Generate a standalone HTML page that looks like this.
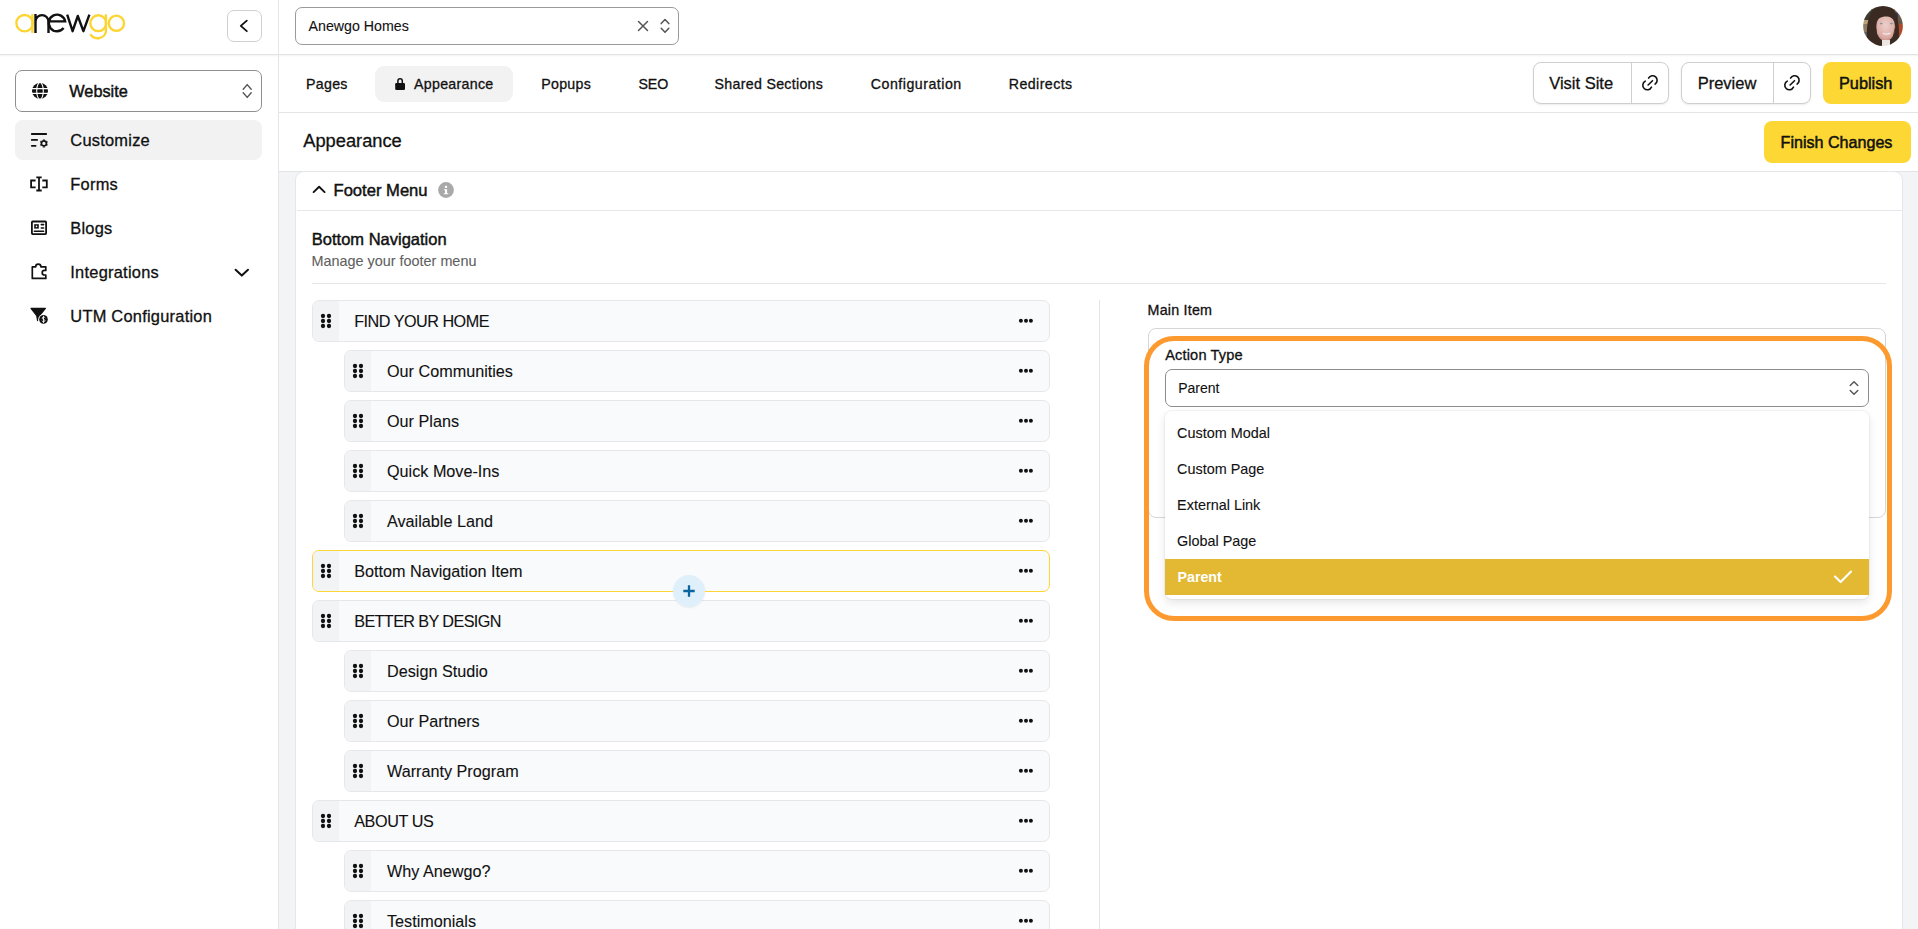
<!DOCTYPE html>
<html><head><meta charset="utf-8">
<style>
*{box-sizing:border-box;margin:0;padding:0}
html,body{width:1918px;height:929px;overflow:hidden;background:#fff}
body{font-family:"Liberation Sans",sans-serif;color:#111;position:relative}
.a{position:absolute}
.t{position:absolute;white-space:nowrap;line-height:1}
.box{position:absolute;border:1px solid #c8c8c8;border-radius:7px;background:#fff}
.btn{position:absolute;border:1px solid #cfcfcf;border-radius:8px;background:#fff;box-shadow:0 1px 2px rgba(0,0,0,.08)}
.yel{position:absolute;background:#fdd835;border-radius:8px}
</style></head><body>
<div class="a" style="left:0;top:54px;width:1918px;height:1px;background:#e3e3e3"></div>
<div class="a" style="left:0;top:55px;width:1918px;height:2px;background:linear-gradient(#f3f3f3,#fff)"></div>
<div class="a" style="left:278px;top:0;width:1px;height:929px;background:#e5e5e5"></div>
<svg class="a" style="left:0;top:0" width="140" height="54" viewBox="0 0 140 54" fill="none" stroke-width="2.4">
<g stroke="#fcd535"><circle cx="24.6" cy="23.2" r="8.2"/><path d="M32.4 14.2V32.9"/>
<circle cx="98.3" cy="23.2" r="7.9"/><path d="M105.9 14.2V31.2A8.2 7.2 0 0 1 90.4 34.2"/>
<circle cx="116.4" cy="23.2" r="7.6"/></g>
<g stroke="#111"><path d="M35.5 14V32.9M35.5 21.6A6.5 6.5 0 0 1 48.5 21.6V32.9"/>
<path d="M48.6 21.4H65.2A8.3 8.3 0 1 0 63.6 28.1"/>
<path d="M67.2 14.6L72.6 31.2L77.8 16L83.4 31.2L89.4 14.6" stroke-linejoin="round"/></g>
</svg>
<div class="box" style="left:227px;top:10px;width:35px;height:32px;border-color:#d0d0d0;border-radius:7px"></div>
<svg class="a" style="left:227px;top:10px" width="35" height="32" viewBox="227 10 35 32" fill="none" stroke="#111" stroke-width="1.8" stroke-linecap="round" stroke-linejoin="round"><path d="M246.8 20.6L240.8 25.9L246.8 31.2"/></svg>
<div class="box" style="left:15px;top:70px;width:247px;height:42px;border-color:#8f8f8f;border-radius:7px"></div>
<svg class="a" style="left:30px;top:81px" width="20" height="20" viewBox="30 81 20 20">
<circle cx="40" cy="90.9" r="8" fill="#111"/>
<g stroke="#fff" stroke-width="1.1" fill="none"><path d="M31 88.6H49M31 93.4H49"/><ellipse cx="40" cy="90.9" rx="3.3" ry="8.4"/></g>
</svg>
<div class="t" style="left:69.30px;top:83.20px;font-size:16.3px;-webkit-text-stroke:0.45px #111">Website</div>
<svg class="a" style="left:240px;top:82px" width="14" height="18" viewBox="240 82 14 18" fill="none" stroke="#555" stroke-width="1.4" stroke-linecap="round" stroke-linejoin="round"><path d="M243.2 89.2L247.2 84.6L251.2 89.2M243.2 92.8L247.2 97.4L251.2 92.8"/></svg>
<div class="a" style="left:15px;top:120px;width:247px;height:40px;background:#f2f2f2;border-radius:8px"></div>
<div class="t" style="left:70.30px;top:132.32px;font-size:16.4px;letter-spacing:0.25px;-webkit-text-stroke:0.3px #111">Customize</div>
<div class="t" style="left:70.30px;top:176.12px;font-size:16.4px;letter-spacing:0.25px;-webkit-text-stroke:0.3px #111">Forms</div>
<div class="t" style="left:70.30px;top:220.12px;font-size:16.4px;letter-spacing:0.25px;-webkit-text-stroke:0.3px #111">Blogs</div>
<div class="t" style="left:70.30px;top:264.12px;font-size:16.4px;letter-spacing:0.25px;-webkit-text-stroke:0.3px #111">Integrations</div>
<div class="t" style="left:70.30px;top:308.12px;font-size:16.4px;letter-spacing:0.25px;-webkit-text-stroke:0.3px #111">UTM Configuration</div>
<svg class="a" style="left:26px;top:120px" width="30" height="220" viewBox="26 120 30 220" fill="none" stroke="#111" stroke-width="1.8" stroke-linecap="round">
<path d="M31.8 134H46.2M31.8 139.9H37.1M31.8 145.8H35.6"/>
<g transform="translate(43.9 143.4)" stroke="#111"><circle r="2.5" stroke-width="1.7"/><path d="M0 -4V-3.2M3.46 -2L2.77 -1.6M3.46 2L2.77 1.6M0 4V3.2M-3.46 2L-2.77 1.6M-3.46 -2L-2.77 -1.6" stroke-width="2" stroke-linecap="butt"/></g>
<path d="M35.6 180.5H31.1V187.4H35.6M42.3 180.5H46.8V187.4H42.3M39 177.4V190.5M36.3 177.4H41.7M36.3 190.5H41.7" stroke-linecap="butt"/>
<rect x="31.9" y="221.5" width="14.2" height="12.6" rx="0.8"/>
<rect x="34.2" y="224.2" width="4.6" height="4.4" fill="#111" stroke="none"/><circle cx="36.5" cy="226.4" r="0.8" fill="#fff" stroke="none"/>
<path d="M41.3 224.6H43.6M41.3 228H43.6M34.4 231.3H43.6" stroke-width="1.6"/>
<path d="M32.3 278.4V266.8H35.7A2.6 2.6 0 0 1 40.9 266.8H45.8V270.4H44.5A2.3 2.3 0 0 0 44.5 275H45.8V278.4Z" stroke-linejoin="round" stroke-width="1.7"/>
<path d="M31 308.4H45.4L39.6 315.6L37.6 320.6L36.7 315.6Z" fill="#111" stroke="#111" stroke-width="1.2" stroke-linejoin="round"/>
<circle cx="43.5" cy="319.4" r="5.3" fill="#fff" stroke="none"/>
<circle cx="43.5" cy="319.4" r="4.3" fill="#111" stroke="none"/>
<path d="M45 317.6C44.6 316.8 42.2 316.8 42.1 318.1C42 319.4 45 319.2 45 320.6C45 321.9 42.4 322 42 321.1M43.5 316.2V322.6" stroke="#fff" stroke-width="0.85" stroke-linecap="round"/>
</svg>
<svg class="a" style="left:230px;top:264px" width="24" height="18" viewBox="230 264 24 18" fill="none" stroke="#111" stroke-width="2" stroke-linecap="round" stroke-linejoin="round"><path d="M235.6 269.8L241.8 275.6L248 269.8"/></svg>
<div class="box" style="left:295px;top:7px;width:384px;height:38px;border-color:#9a9a9a;border-radius:7px"></div>
<div class="t" style="left:308.60px;top:19.28px;font-size:14.2px;-webkit-text-stroke:0.1px #111">Anewgo Homes</div>
<svg class="a" style="left:634px;top:15px" width="40" height="22" viewBox="634 15 40 22" fill="none" stroke="#555" stroke-width="1.5" stroke-linecap="round" stroke-linejoin="round"><path d="M638.5 21.5L647.5 30.5M647.5 21.5L638.5 30.5"/><path d="M661.2 23.6L665 19.6L668.8 23.6M661.2 28.2L665 32.2L668.8 28.2"/></svg>
<svg class="a" style="left:1863px;top:6px" width="40" height="40" viewBox="0 0 40 40">
<defs><filter id="bl"><feGaussianBlur stdDeviation="0.5"/></filter><clipPath id="av"><circle cx="20" cy="20" r="19.9"/></clipPath>
<radialGradient id="fg" cx="0.5" cy="0.42" r="0.6"><stop offset="0" stop-color="#ecd0cc"/><stop offset="0.7" stop-color="#dfb0aa"/><stop offset="1" stop-color="#c99088"/></radialGradient></defs>
<g clip-path="url(#av)" filter="url(#bl)">
<rect width="40" height="40" fill="#8c7c64"/>
<rect x="0" y="0" width="14" height="14" fill="#3c3a30"/>
<rect x="0" y="14" width="9" height="4" fill="#b8a27a"/>
<rect x="0" y="26" width="9" height="14" fill="#5a6068"/>
<rect x="31" y="0" width="9" height="40" fill="#6a5848"/>
<rect x="33" y="7" width="1.8" height="22" fill="#2a3560"/>
<rect x="35.5" y="18" width="4.5" height="12" fill="#b04a2a"/>
<path d="M5 40C2 22 4 0 21 -1C35 -1 37 16 35.5 40Z" fill="#3b2a22"/>
<ellipse cx="22.6" cy="21.5" rx="9.6" ry="13.6" fill="url(#fg)"/>
<path d="M12 17C13 9 18 6 23 6.5C29 7 32 11 33 17C30 12 27 10.5 23 10.5C18 10.5 14 13 12 17Z" fill="#3b2a22"/>
<path d="M10 40C11 30 12 24 13 18L15 40Z" fill="#3b2a22"/>
<path d="M31 40C31 30 32 24 32.5 18L28 40Z" fill="#3b2a22"/>
<rect x="19" y="34" width="8" height="6" fill="#ece6e2"/>
<ellipse cx="18.2" cy="17.6" rx="1.4" ry="0.8" fill="#7b94a6"/><ellipse cx="28.4" cy="17.6" rx="1.4" ry="0.8" fill="#7b94a6"/>
<path d="M20 27.2C22 28.4 25 28.4 27.3 27.2" stroke="#f3eeee" stroke-width="1.3" fill="none"/>
</g></svg>
<div class="a" style="left:279px;top:112px;width:1639px;height:1px;background:#e5e5e5"></div>
<div class="a" style="left:375px;top:66px;width:138px;height:36px;background:#f2f2f2;border-radius:9px"></div>
<svg class="a" style="left:392px;top:76px" width="16" height="16" viewBox="392 76 16 16"><path d="M397.9 83.2V80.9A2.2 2.2 0 0 1 402.3 80.9V83.2" fill="none" stroke="#111" stroke-width="1.5"/><rect x="395.2" y="83" width="9.8" height="6.9" rx="1.2" fill="#111"/></svg>
<div class="t" style="left:306.00px;top:77.18px;font-size:14.2px;letter-spacing:0.3px;-webkit-text-stroke:0.3px #111">Pages</div>
<div class="t" style="left:414.00px;top:77.18px;font-size:14.2px;letter-spacing:0.3px;-webkit-text-stroke:0.3px #111">Appearance</div>
<div class="t" style="left:541.20px;top:77.18px;font-size:14.2px;letter-spacing:0.3px;-webkit-text-stroke:0.3px #111">Popups</div>
<div class="t" style="left:638.40px;top:77.18px;font-size:14.2px;letter-spacing:0px;-webkit-text-stroke:0.3px #111">SEO</div>
<div class="t" style="left:714.60px;top:77.18px;font-size:14.2px;letter-spacing:0.3px;-webkit-text-stroke:0.3px #111">Shared Sections</div>
<div class="t" style="left:870.80px;top:77.18px;font-size:14.2px;letter-spacing:0.5px;-webkit-text-stroke:0.3px #111">Configuration</div>
<div class="t" style="left:1008.70px;top:77.18px;font-size:14.2px;letter-spacing:0.45px;-webkit-text-stroke:0.3px #111">Redirects</div>
<div class="btn" style="left:1533px;top:62px;width:136px;height:42px"></div>
<div class="a" style="left:1631px;top:63px;width:1px;height:40px;background:#cfcfcf"></div>
<div class="t" style="left:1549.20px;top:74.93px;font-size:16.5px;-webkit-text-stroke:0.3px #111">Visit Site</div>
<svg class="a" style="left:1640.7px;top:73px" width="19" height="19" viewBox="1640.7 73 19 19" fill="none" stroke="#111" stroke-width="1.6" stroke-linecap="round">
<path d="M1648.28 78.11A4.55 4.55 0 1 1 1654.78 84.07M1644.98 81.15A4.55 4.55 0 1 0 1651.17 87.12M1647.8 85L1652.2 80.7"/></svg>
<div class="btn" style="left:1681px;top:62px;width:130px;height:42px"></div>
<div class="a" style="left:1773.4px;top:63px;width:1px;height:40px;background:#cfcfcf"></div>
<div class="t" style="left:1697.70px;top:74.93px;font-size:16.5px;-webkit-text-stroke:0.3px #111">Preview</div>
<svg class="a" style="left:1782.7px;top:73px" width="19" height="19" viewBox="1782.7 73 19 19" fill="none" stroke="#111" stroke-width="1.6" stroke-linecap="round">
<path d="M1790.28 78.11A4.55 4.55 0 1 1 1796.78 84.07M1786.98 81.15A4.55 4.55 0 1 0 1793.17 87.12M1789.8 85L1794.2 80.7"/></svg>
<div class="yel" style="left:1823px;top:62px;width:88px;height:42px"></div>
<div class="t" style="left:1839.00px;top:75.10px;font-size:16.3px;-webkit-text-stroke:0.5px #111">Publish</div>
<div class="t" style="left:303.20px;top:132.21px;font-size:18.3px;-webkit-text-stroke:0.3px #111">Appearance</div>
<div class="yel" style="left:1764px;top:121px;width:147px;height:42px"></div>
<div class="t" style="left:1780.60px;top:134.17px;font-size:16.1px;-webkit-text-stroke:0.5px #111">Finish Changes</div>
<div class="a" style="left:279px;top:171px;width:1639px;height:758px;background:#f3f4f6"></div>
<div class="a" style="left:279px;top:171px;width:1639px;height:1px;background:#e3e3e3"></div>
<div class="a" style="left:295px;top:171px;width:1608px;height:800px;background:#fff;border:1px solid #e5e7eb;border-radius:9px"></div>
<svg class="a" style="left:310px;top:182px" width="18" height="14" viewBox="310 182 18 14" fill="none" stroke="#111" stroke-width="1.9" stroke-linecap="round" stroke-linejoin="round"><path d="M313.6 192.1L319.1 186.8L324.6 192.1"/></svg>
<div class="t" style="left:333.50px;top:182.75px;font-size:16.6px;-webkit-text-stroke:0.45px #111">Footer Menu</div>
<svg class="a" style="left:437px;top:181px" width="18" height="18" viewBox="437 181 18 18"><circle cx="446" cy="190" r="7.9" fill="#a9a9a9"/><rect x="444.9" y="185.8" width="2.2" height="2.1" fill="#fff"/><path d="M444 189.2H447.1V193.2H448.3V194.3H443.8V193.2H445V190.3H444Z" fill="#fff"/></svg>
<div class="a" style="left:297px;top:210px;width:1605px;height:1px;background:#e5e7eb"></div>
<div class="t" style="left:311.80px;top:231.03px;font-size:16.5px;-webkit-text-stroke:0.45px #111">Bottom Navigation</div>
<div class="t" style="left:311.60px;top:253.81px;font-size:14.4px;color:#5f5f5f;-webkit-text-stroke:0.1px #5f5f5f">Manage your footer menu</div>
<div class="a" style="left:312px;top:283px;width:1574px;height:1px;background:#e5e7eb"></div>
<div class="a" style="left:1099px;top:300px;width:1px;height:629px;background:#e3e3e3"></div>
<div class="a" style="left:312px;top:300px;width:738px;height:42px;border:1px solid #e5e7eb;border-radius:7px;background:#f9fafb;overflow:hidden"><div class="a" style="left:0;top:0;width:26px;height:40px;background:#f2f3f5"></div></div>
<svg class="a" style="left:312px;top:300px" width="30" height="42" viewBox="0 0 30 42" fill="#111"><circle cx="11" cy="16" r="2.15"/><circle cx="17" cy="16" r="2.15"/><circle cx="11" cy="21" r="2.15"/><circle cx="17" cy="21" r="2.15"/><circle cx="11" cy="26" r="2.15"/><circle cx="17" cy="26" r="2.15"/></svg>
<div class="t" style="left:354.20px;top:312.89px;font-size:16.2px;letter-spacing:-0.5px;-webkit-text-stroke:0.1px #111">FIND YOUR HOME</div>
<svg class="a" style="left:1015px;top:315px" width="20" height="12" viewBox="0 0 20 12" fill="#111"><circle cx="5.9" cy="5.8" r="2"/><circle cx="11" cy="5.8" r="2"/><circle cx="15.9" cy="5.8" r="2"/></svg>
<div class="a" style="left:344px;top:350px;width:706px;height:42px;border:1px solid #e5e7eb;border-radius:7px;background:#f9fafb;overflow:hidden"><div class="a" style="left:0;top:0;width:26px;height:40px;background:#f2f3f5"></div></div>
<svg class="a" style="left:344px;top:350px" width="30" height="42" viewBox="0 0 30 42" fill="#111"><circle cx="11" cy="16" r="2.15"/><circle cx="17" cy="16" r="2.15"/><circle cx="11" cy="21" r="2.15"/><circle cx="17" cy="21" r="2.15"/><circle cx="11" cy="26" r="2.15"/><circle cx="17" cy="26" r="2.15"/></svg>
<div class="t" style="left:387.00px;top:362.89px;font-size:16.2px;letter-spacing:0px;-webkit-text-stroke:0.1px #111">Our Communities</div>
<svg class="a" style="left:1015px;top:365px" width="20" height="12" viewBox="0 0 20 12" fill="#111"><circle cx="5.9" cy="5.8" r="2"/><circle cx="11" cy="5.8" r="2"/><circle cx="15.9" cy="5.8" r="2"/></svg>
<div class="a" style="left:344px;top:400px;width:706px;height:42px;border:1px solid #e5e7eb;border-radius:7px;background:#f9fafb;overflow:hidden"><div class="a" style="left:0;top:0;width:26px;height:40px;background:#f2f3f5"></div></div>
<svg class="a" style="left:344px;top:400px" width="30" height="42" viewBox="0 0 30 42" fill="#111"><circle cx="11" cy="16" r="2.15"/><circle cx="17" cy="16" r="2.15"/><circle cx="11" cy="21" r="2.15"/><circle cx="17" cy="21" r="2.15"/><circle cx="11" cy="26" r="2.15"/><circle cx="17" cy="26" r="2.15"/></svg>
<div class="t" style="left:387.00px;top:412.89px;font-size:16.2px;letter-spacing:0px;-webkit-text-stroke:0.1px #111">Our Plans</div>
<svg class="a" style="left:1015px;top:415px" width="20" height="12" viewBox="0 0 20 12" fill="#111"><circle cx="5.9" cy="5.8" r="2"/><circle cx="11" cy="5.8" r="2"/><circle cx="15.9" cy="5.8" r="2"/></svg>
<div class="a" style="left:344px;top:450px;width:706px;height:42px;border:1px solid #e5e7eb;border-radius:7px;background:#f9fafb;overflow:hidden"><div class="a" style="left:0;top:0;width:26px;height:40px;background:#f2f3f5"></div></div>
<svg class="a" style="left:344px;top:450px" width="30" height="42" viewBox="0 0 30 42" fill="#111"><circle cx="11" cy="16" r="2.15"/><circle cx="17" cy="16" r="2.15"/><circle cx="11" cy="21" r="2.15"/><circle cx="17" cy="21" r="2.15"/><circle cx="11" cy="26" r="2.15"/><circle cx="17" cy="26" r="2.15"/></svg>
<div class="t" style="left:387.00px;top:462.89px;font-size:16.2px;letter-spacing:0px;-webkit-text-stroke:0.1px #111">Quick Move-Ins</div>
<svg class="a" style="left:1015px;top:465px" width="20" height="12" viewBox="0 0 20 12" fill="#111"><circle cx="5.9" cy="5.8" r="2"/><circle cx="11" cy="5.8" r="2"/><circle cx="15.9" cy="5.8" r="2"/></svg>
<div class="a" style="left:344px;top:500px;width:706px;height:42px;border:1px solid #e5e7eb;border-radius:7px;background:#f9fafb;overflow:hidden"><div class="a" style="left:0;top:0;width:26px;height:40px;background:#f2f3f5"></div></div>
<svg class="a" style="left:344px;top:500px" width="30" height="42" viewBox="0 0 30 42" fill="#111"><circle cx="11" cy="16" r="2.15"/><circle cx="17" cy="16" r="2.15"/><circle cx="11" cy="21" r="2.15"/><circle cx="17" cy="21" r="2.15"/><circle cx="11" cy="26" r="2.15"/><circle cx="17" cy="26" r="2.15"/></svg>
<div class="t" style="left:387.00px;top:512.89px;font-size:16.2px;letter-spacing:0px;-webkit-text-stroke:0.1px #111">Available Land</div>
<svg class="a" style="left:1015px;top:515px" width="20" height="12" viewBox="0 0 20 12" fill="#111"><circle cx="5.9" cy="5.8" r="2"/><circle cx="11" cy="5.8" r="2"/><circle cx="15.9" cy="5.8" r="2"/></svg>
<div class="a" style="left:312px;top:550px;width:738px;height:42px;border:1px solid #fdd535;border-radius:7px;background:#f9fafb;overflow:hidden"><div class="a" style="left:0;top:0;width:26px;height:40px;background:#f2f3f5"></div></div>
<svg class="a" style="left:312px;top:550px" width="30" height="42" viewBox="0 0 30 42" fill="#111"><circle cx="11" cy="16" r="2.15"/><circle cx="17" cy="16" r="2.15"/><circle cx="11" cy="21" r="2.15"/><circle cx="17" cy="21" r="2.15"/><circle cx="11" cy="26" r="2.15"/><circle cx="17" cy="26" r="2.15"/></svg>
<div class="t" style="left:354.20px;top:562.89px;font-size:16.2px;letter-spacing:0px;-webkit-text-stroke:0.1px #111">Bottom Navigation Item</div>
<svg class="a" style="left:1015px;top:565px" width="20" height="12" viewBox="0 0 20 12" fill="#111"><circle cx="5.9" cy="5.8" r="2"/><circle cx="11" cy="5.8" r="2"/><circle cx="15.9" cy="5.8" r="2"/></svg>
<div class="a" style="left:312px;top:600px;width:738px;height:42px;border:1px solid #e5e7eb;border-radius:7px;background:#f9fafb;overflow:hidden"><div class="a" style="left:0;top:0;width:26px;height:40px;background:#f2f3f5"></div></div>
<svg class="a" style="left:312px;top:600px" width="30" height="42" viewBox="0 0 30 42" fill="#111"><circle cx="11" cy="16" r="2.15"/><circle cx="17" cy="16" r="2.15"/><circle cx="11" cy="21" r="2.15"/><circle cx="17" cy="21" r="2.15"/><circle cx="11" cy="26" r="2.15"/><circle cx="17" cy="26" r="2.15"/></svg>
<div class="t" style="left:354.20px;top:612.89px;font-size:16.2px;letter-spacing:-0.6px;-webkit-text-stroke:0.1px #111">BETTER BY DESIGN</div>
<svg class="a" style="left:1015px;top:615px" width="20" height="12" viewBox="0 0 20 12" fill="#111"><circle cx="5.9" cy="5.8" r="2"/><circle cx="11" cy="5.8" r="2"/><circle cx="15.9" cy="5.8" r="2"/></svg>
<div class="a" style="left:344px;top:650px;width:706px;height:42px;border:1px solid #e5e7eb;border-radius:7px;background:#f9fafb;overflow:hidden"><div class="a" style="left:0;top:0;width:26px;height:40px;background:#f2f3f5"></div></div>
<svg class="a" style="left:344px;top:650px" width="30" height="42" viewBox="0 0 30 42" fill="#111"><circle cx="11" cy="16" r="2.15"/><circle cx="17" cy="16" r="2.15"/><circle cx="11" cy="21" r="2.15"/><circle cx="17" cy="21" r="2.15"/><circle cx="11" cy="26" r="2.15"/><circle cx="17" cy="26" r="2.15"/></svg>
<div class="t" style="left:387.00px;top:662.89px;font-size:16.2px;letter-spacing:0px;-webkit-text-stroke:0.1px #111">Design Studio</div>
<svg class="a" style="left:1015px;top:665px" width="20" height="12" viewBox="0 0 20 12" fill="#111"><circle cx="5.9" cy="5.8" r="2"/><circle cx="11" cy="5.8" r="2"/><circle cx="15.9" cy="5.8" r="2"/></svg>
<div class="a" style="left:344px;top:700px;width:706px;height:42px;border:1px solid #e5e7eb;border-radius:7px;background:#f9fafb;overflow:hidden"><div class="a" style="left:0;top:0;width:26px;height:40px;background:#f2f3f5"></div></div>
<svg class="a" style="left:344px;top:700px" width="30" height="42" viewBox="0 0 30 42" fill="#111"><circle cx="11" cy="16" r="2.15"/><circle cx="17" cy="16" r="2.15"/><circle cx="11" cy="21" r="2.15"/><circle cx="17" cy="21" r="2.15"/><circle cx="11" cy="26" r="2.15"/><circle cx="17" cy="26" r="2.15"/></svg>
<div class="t" style="left:387.00px;top:712.89px;font-size:16.2px;letter-spacing:0px;-webkit-text-stroke:0.1px #111">Our Partners</div>
<svg class="a" style="left:1015px;top:715px" width="20" height="12" viewBox="0 0 20 12" fill="#111"><circle cx="5.9" cy="5.8" r="2"/><circle cx="11" cy="5.8" r="2"/><circle cx="15.9" cy="5.8" r="2"/></svg>
<div class="a" style="left:344px;top:750px;width:706px;height:42px;border:1px solid #e5e7eb;border-radius:7px;background:#f9fafb;overflow:hidden"><div class="a" style="left:0;top:0;width:26px;height:40px;background:#f2f3f5"></div></div>
<svg class="a" style="left:344px;top:750px" width="30" height="42" viewBox="0 0 30 42" fill="#111"><circle cx="11" cy="16" r="2.15"/><circle cx="17" cy="16" r="2.15"/><circle cx="11" cy="21" r="2.15"/><circle cx="17" cy="21" r="2.15"/><circle cx="11" cy="26" r="2.15"/><circle cx="17" cy="26" r="2.15"/></svg>
<div class="t" style="left:387.00px;top:762.89px;font-size:16.2px;letter-spacing:0px;-webkit-text-stroke:0.1px #111">Warranty Program</div>
<svg class="a" style="left:1015px;top:765px" width="20" height="12" viewBox="0 0 20 12" fill="#111"><circle cx="5.9" cy="5.8" r="2"/><circle cx="11" cy="5.8" r="2"/><circle cx="15.9" cy="5.8" r="2"/></svg>
<div class="a" style="left:312px;top:800px;width:738px;height:42px;border:1px solid #e5e7eb;border-radius:7px;background:#f9fafb;overflow:hidden"><div class="a" style="left:0;top:0;width:26px;height:40px;background:#f2f3f5"></div></div>
<svg class="a" style="left:312px;top:800px" width="30" height="42" viewBox="0 0 30 42" fill="#111"><circle cx="11" cy="16" r="2.15"/><circle cx="17" cy="16" r="2.15"/><circle cx="11" cy="21" r="2.15"/><circle cx="17" cy="21" r="2.15"/><circle cx="11" cy="26" r="2.15"/><circle cx="17" cy="26" r="2.15"/></svg>
<div class="t" style="left:354.20px;top:812.89px;font-size:16.2px;letter-spacing:-0.4px;-webkit-text-stroke:0.1px #111">ABOUT US</div>
<svg class="a" style="left:1015px;top:815px" width="20" height="12" viewBox="0 0 20 12" fill="#111"><circle cx="5.9" cy="5.8" r="2"/><circle cx="11" cy="5.8" r="2"/><circle cx="15.9" cy="5.8" r="2"/></svg>
<div class="a" style="left:344px;top:850px;width:706px;height:42px;border:1px solid #e5e7eb;border-radius:7px;background:#f9fafb;overflow:hidden"><div class="a" style="left:0;top:0;width:26px;height:40px;background:#f2f3f5"></div></div>
<svg class="a" style="left:344px;top:850px" width="30" height="42" viewBox="0 0 30 42" fill="#111"><circle cx="11" cy="16" r="2.15"/><circle cx="17" cy="16" r="2.15"/><circle cx="11" cy="21" r="2.15"/><circle cx="17" cy="21" r="2.15"/><circle cx="11" cy="26" r="2.15"/><circle cx="17" cy="26" r="2.15"/></svg>
<div class="t" style="left:387.00px;top:862.89px;font-size:16.2px;letter-spacing:0px;-webkit-text-stroke:0.1px #111">Why Anewgo?</div>
<svg class="a" style="left:1015px;top:865px" width="20" height="12" viewBox="0 0 20 12" fill="#111"><circle cx="5.9" cy="5.8" r="2"/><circle cx="11" cy="5.8" r="2"/><circle cx="15.9" cy="5.8" r="2"/></svg>
<div class="a" style="left:344px;top:900px;width:706px;height:42px;border:1px solid #e5e7eb;border-radius:7px;background:#f9fafb;overflow:hidden"><div class="a" style="left:0;top:0;width:26px;height:40px;background:#f2f3f5"></div></div>
<svg class="a" style="left:344px;top:900px" width="30" height="42" viewBox="0 0 30 42" fill="#111"><circle cx="11" cy="16" r="2.15"/><circle cx="17" cy="16" r="2.15"/><circle cx="11" cy="21" r="2.15"/><circle cx="17" cy="21" r="2.15"/><circle cx="11" cy="26" r="2.15"/><circle cx="17" cy="26" r="2.15"/></svg>
<div class="t" style="left:387.00px;top:912.89px;font-size:16.2px;letter-spacing:0px;-webkit-text-stroke:0.1px #111">Testimonials</div>
<svg class="a" style="left:1015px;top:915px" width="20" height="12" viewBox="0 0 20 12" fill="#111"><circle cx="5.9" cy="5.8" r="2"/><circle cx="11" cy="5.8" r="2"/><circle cx="15.9" cy="5.8" r="2"/></svg>
<div class="a" style="left:673px;top:575px;width:32px;height:32px;border-radius:50%;background:#dff0fb;box-shadow:0 1px 2px rgba(0,0,0,.06)"></div>
<svg class="a" style="left:681px;top:583px" width="16" height="16" viewBox="681 583 16 16" fill="none" stroke="#0b66a0" stroke-width="2.3"><path d="M689 585.3V596.7M683.3 591H694.7"/></svg>
<div class="t" style="left:1147.60px;top:303.10px;font-size:14.3px;letter-spacing:0.2px;-webkit-text-stroke:0.3px #111">Main Item</div>
<div class="a" style="left:1148px;top:328px;width:738px;height:190px;border:1px solid #d6d6d6;border-radius:8px;background:#fff"></div>
<div class="a" style="left:1144px;top:336.3px;width:748.4px;height:284.4px;border:5.6px solid #fd9a2f;border-radius:30px"></div>
<div class="t" style="left:1165.20px;top:347.64px;font-size:14.6px;letter-spacing:0.15px;-webkit-text-stroke:0.3px #111">Action Type</div>
<div class="a" style="left:1165px;top:369px;width:704px;height:38px;border:1px solid #8d8d8d;border-radius:7px;background:#fff"></div>
<div class="t" style="left:1178.20px;top:381.25px;font-size:14px;-webkit-text-stroke:0.1px #111">Parent</div>
<svg class="a" style="left:1846px;top:378px" width="16" height="20" viewBox="1846 378 16 20" fill="none" stroke="#555" stroke-width="1.4" stroke-linecap="round" stroke-linejoin="round"><path d="M1850.2 385.6L1854 381.8L1857.8 385.6M1850.2 390.4L1854 394.2L1857.8 390.4"/></svg>
<div class="a" style="left:1165px;top:411px;width:704px;height:188px;background:#fff;border-radius:7px;box-shadow:0 0 0 1px rgba(0,0,0,.04),0 4px 10px rgba(0,0,0,.10)"></div>
<div class="t" style="left:1177.10px;top:425.71px;font-size:14.4px;-webkit-text-stroke:0.1px #111">Custom Modal</div>
<div class="t" style="left:1177.10px;top:461.71px;font-size:14.4px;-webkit-text-stroke:0.1px #111">Custom Page</div>
<div class="t" style="left:1177.10px;top:497.71px;font-size:14.4px;-webkit-text-stroke:0.1px #111">External Link</div>
<div class="t" style="left:1177.10px;top:533.71px;font-size:14.4px;-webkit-text-stroke:0.1px #111">Global Page</div>
<div class="a" style="left:1165px;top:559px;width:704px;height:36px;background:#e3b832"></div>
<div class="t" style="left:1177.60px;top:570.08px;font-size:14.2px;font-weight:700;color:#fff">Parent</div>
<svg class="a" style="left:1832px;top:568px" width="22" height="18" viewBox="1832 568 22 18" fill="none" stroke="#fff" stroke-width="2.1" stroke-linecap="round" stroke-linejoin="round"><path d="M1835 576.4L1840.6 582.1L1851 571.6"/></svg>
</body></html>
